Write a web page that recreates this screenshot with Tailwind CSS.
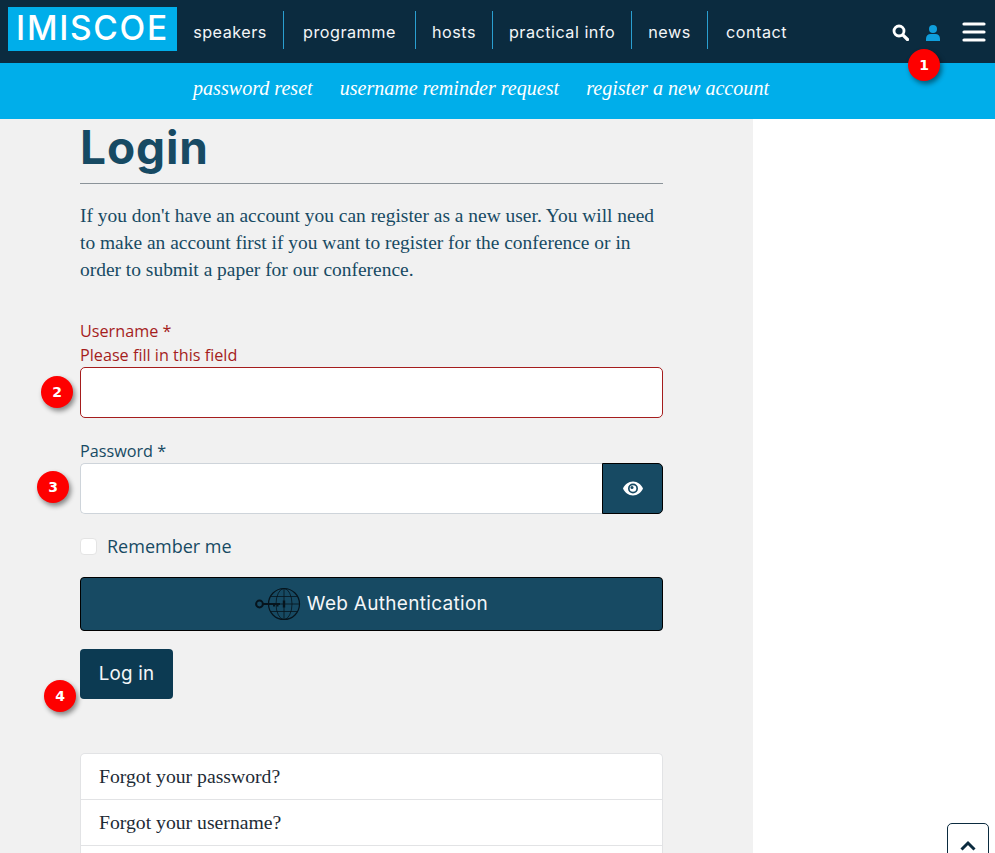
<!DOCTYPE html>
<html lang="en">
<head>
<meta charset="utf-8">
<title>Login</title>
<script src="https://cdn.jsdelivr.net/npm/@tailwindcss/browser@4"></script>
</head>
<body class="relative h-[853px] overflow-hidden bg-white font-['Open_Sans',sans-serif]">
<header class="flex h-[63px] items-center bg-[#0b2b3f] pb-[5px] pl-2 pr-[9px]">
  <a class="flex h-[44px] w-[169px] items-center justify-center bg-[#00aeea] font-['Inter',sans-serif] text-[33.500px] leading-none font-medium tracking-[1.700px] text-white">IMISCOE</a>
  <nav class="mt-[2px] flex h-[38px] items-center font-['Inter',sans-serif] text-[16.200px] tracking-[0.500px] text-[#f4f6f8]">
    <a class="flex h-full w-[107px] items-center justify-center border-r border-[#2a9fd0] pt-[4px]">speakers</a>
    <a class="flex h-full w-[132px] items-center justify-center border-r border-[#2a9fd0] pt-[4px]">programme</a>
    <a class="flex h-full w-[77px] items-center justify-center border-r border-[#2a9fd0] pt-[4px]">hosts</a>
    <a class="flex h-full w-[139px] items-center justify-center border-r border-[#2a9fd0] pt-[4px]">practical info</a>
    <a class="flex h-full w-[76px] items-center justify-center border-r border-[#2a9fd0] pt-[4px]">news</a>
    <a class="flex h-full w-[97px] items-center justify-center pt-[4px]">contact</a>
  </nav>
  <div class="mt-[6px] ml-auto flex items-center">
    <svg class="mr-[1px] h-[17px] w-[17px]" viewBox="0 0 17 17" fill="none" stroke="#fff"><circle cx="7" cy="7" r="5" stroke-width="2.800"/><path d="M10.800 10.800 15.500 15.500" stroke-width="3.200" stroke-linecap="round"/></svg>
    <svg class="mt-[2px] ml-[15px] h-[16px] w-[16px]" viewBox="0 0 16 16" fill="#0f9fdc"><circle cx="8" cy="4" r="4"/><path d="M1 16v-2.500C1 11 3 9 5.500 9h5C13 9 15 11 15 13.500V16z"/></svg>
    <svg class="ml-[21px] h-[20px] w-[24px]" viewBox="0 0 24 20" stroke="#fff" stroke-width="3.200" stroke-linecap="round"><path d="M2 2h20M2 10h20M2 18h20"/></svg>
  </div>
</header>
<div class="flex h-[56px] items-center gap-[27px] bg-[#00aeea] pb-[5px] pl-[193px] font-['Liberation_Serif',serif] text-[20.100px] text-white italic">
  <a>password reset</a><a>username reminder request</a><a>register a new account</a>
</div>
<main class="h-[734px] w-[753px] bg-[#f1f1f1] pl-[80px]">
  <div class="w-[583px]">
    <h1 class="h-[65px] border-b border-[#8b9399] pt-[1px] font-['Inter',sans-serif] text-[46px] leading-[54px] font-bold tracking-[0.900px] text-[#174a63]">Login</h1>
    <p class="mt-[18px] font-['Liberation_Serif',serif] text-[19.450px] leading-[27px] text-[#174a63]">If you don't have an account you can register as a new user. You will need to make an account first if you want to register for the conference or in order to submit a paper for our conference.</p>
    <div class="mt-[36px] text-[16.200px] leading-[24px] text-[#a51d1d]">
      <label class="block">Username *</label>
      <span class="block">Please fill in this field</span>
      <input class="block h-[51px] w-full rounded-[5px] border border-[#a51d1d] bg-white" type="text">
    </div>
    <label class="mt-[21px] block text-[16.200px] leading-[24px] text-[#174a63]">Password *</label>
    <div class="flex h-[51px]">
      <input class="h-full min-w-0 flex-1 rounded-l-[5px] border border-r-0 border-[#ced4da] bg-white" type="password">
      <button class="flex h-full w-[61px] items-center justify-center rounded-r-[5px] border border-black bg-[#174a63]">
        <svg class="h-[15px] w-[20px]" viewBox="0 0 20 15"><path fill="#fff" fill-rule="evenodd" d="M10 0.500C5.500 0.500 1.800 3.500 0 7.500c1.800 4 5.500 7 10 7s8.200-3 10-7c-1.800-4-5.500-7-10-7zM10 12.500a5 5 0 1 1 0-10 5 5 0 0 1 0 10z"/><circle cx="10" cy="7.500" r="3.300" fill="#fff"/><circle cx="9" cy="6.500" r="1.500" fill="#174a63"/></svg>
      </button>
    </div>
    <label class="mt-[20px] flex h-[24px] items-center text-[18px] text-[#174a63]">
      <span class="block h-[17px] w-[17px] rounded-[4px] border border-[#e4e4e4] bg-white"></span>
      <span class="ml-[10px]">Remember me</span>
    </label>
    <button class="mt-[19px] flex h-[54px] w-full items-center justify-center gap-[6px] rounded-[4px] border border-black bg-[#174a63] font-['Inter',sans-serif] text-[19px] tracking-[0.300px] text-[#f4f6f8]">
      <svg class="h-[34px] w-[46px]" viewBox="0 0 46 34" fill="none" stroke="#06141d">
        <circle cx="29" cy="17" r="15.500" stroke-width="1.200"/>
        <ellipse cx="29" cy="17" rx="8" ry="15.500" stroke-width="0.800"/>
        <path d="M29 1.500v31M15 9.500h28M13.500 17h31M15 24.500h28" stroke-width="0.800"/>
        <circle cx="4.500" cy="17" r="3.400" stroke-width="2"/>
        <path d="M8 17h17M19 17v2.500M22.500 17v2.500" stroke-width="2"/>
        <path d="M29 13.500v7" stroke-width="2.400"/>
      </svg>
      <span class="pt-[1px]">Web Authentication</span>
    </button>
    <button class="mt-[18px] h-[50px] w-[93px] rounded-[4px] bg-[#0c3a52] pt-[1px] font-['Inter',sans-serif] text-[18.800px] tracking-[0.200px] text-[#f4f6f8]">Log in</button>
    <ul class="mt-[54px] rounded-t-[5px] border border-b-0 border-[#e2e3e5] bg-white font-['Liberation_Serif',serif] text-[19.700px] text-[#1d2b36]">
      <li class="flex h-[46px] items-center border-b border-[#e2e3e5] pt-[1px] pl-[18px]">Forgot your password?</li>
      <li class="flex h-[46px] items-center border-b border-[#e2e3e5] pt-[1px] pl-[18px]">Forgot your username?</li>
      <li class="h-[46px]"></li>
    </ul>
  </div>
</main>
<a class="absolute top-[823px] left-[947px] flex h-[60px] w-[42px] justify-center rounded-[5px] border border-[#0b2b3f] bg-white pt-[16px]">
  <svg class="h-[11px] w-[16px]" viewBox="0 0 16 11" fill="none" stroke="#0b2b3f" stroke-width="3"><path d="M1.500 9.500 8 3l6.500 6.500"/></svg>
</a>
<span class="absolute top-[49px] left-[908px] flex h-[32px] w-[32px] items-center justify-center rounded-full bg-[#fe0000] font-['DejaVu_Sans',sans-serif] text-[14px] font-bold text-white shadow-[2px_3px_5px_rgba(0,0,0,0.45)]">1</span>
<span class="absolute top-[376px] left-[41px] flex h-[32px] w-[32px] items-center justify-center rounded-full bg-[#fe0000] font-['DejaVu_Sans',sans-serif] text-[14px] font-bold text-white shadow-[2px_3px_5px_rgba(0,0,0,0.45)]">2</span>
<span class="absolute top-[471px] left-[37px] flex h-[32px] w-[32px] items-center justify-center rounded-full bg-[#fe0000] font-['DejaVu_Sans',sans-serif] text-[14px] font-bold text-white shadow-[2px_3px_5px_rgba(0,0,0,0.45)]">3</span>
<span class="absolute top-[680px] left-[44px] flex h-[32px] w-[32px] items-center justify-center rounded-full bg-[#fe0000] font-['DejaVu_Sans',sans-serif] text-[14px] font-bold text-white shadow-[2px_3px_5px_rgba(0,0,0,0.45)]">4</span>
</body>
</html>
